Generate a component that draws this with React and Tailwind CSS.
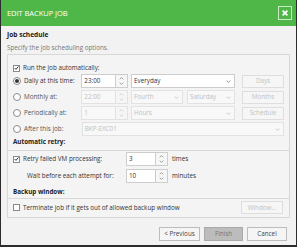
import React from 'react';

const Chevron = ({ up, className = '' }) => (
    <svg viewBox="0 0 8 5" className={`w-[5px] h-[3px] ${className}`} fill="none" stroke="currentColor" strokeWidth="1.3">
        {up ? <path d="M1 4 L4 1 L7 4" /> : <path d="M1 1 L4 4 L7 1" />}
    </svg>
);

const Spinner = ({ disabled }) => (
    <div className={`w-[12px] h-[14px] flex flex-col items-center justify-center gap-[2px] border border-l-0 ${disabled ? 'border-[#e2e2e2] bg-[#f6f6f6] text-[#c8c8c8]' : 'border-[#cdcdcd] bg-[#f7f7f7] text-[#888]'}`}>
        <Chevron up />
        <Chevron />
    </div>
);

const TextBox = ({ value, width, disabled }) => (
    <div className={`h-[14px] ${width} flex items-center px-[2px] border ${disabled ? 'border-[#e2e2e2] bg-[#f8f8f8] text-[#c0c0c0]' : 'border-[#cdcdcd] bg-white text-[#333]'}`}>
        {value}
    </div>
);

const Select = ({ value, width, disabled }) => (
    <div className={`h-[14px] ${width} flex items-center border ${disabled ? 'border-[#e2e2e2] bg-[#f8f8f8] text-[#c0c0c0]' : 'border-[#cdcdcd] bg-white text-[#333]'}`}>
        <span className="flex-1 px-[2px]">{value}</span>
        <span className={`w-[12px] h-full flex items-center justify-center ${disabled ? 'text-[#c0c0c0]' : 'text-[#777]'}`}>
            <Chevron />
        </span>
    </div>
);

const SideButton = ({ label }) => (
    <div className="w-[42px] h-[13px] flex items-center justify-center border border-[#dedede] bg-[#f6f6f6] text-[#c2c2c2]">
        {label}
    </div>
);

const Radio = ({ checked }) => (
    <span className="w-[8px] h-[8px] rounded-full border border-[#8a8a8a] bg-white flex items-center justify-center shrink-0">
        {checked && <span className="w-[4px] h-[4px] rounded-full bg-[#333]" />}
    </span>
);

const Checkbox = ({ checked }) => (
    <span className="w-[7px] h-[7px] border border-[#8a8a8a] bg-white flex items-center justify-center shrink-0">
        {checked && (
            <svg viewBox="0 0 8 8" className="w-[6px] h-[6px]" fill="none" stroke="#333" strokeWidth="1.6">
                <path d="M1 4 L3.2 6.2 L7 1.5" />
            </svg>
        )}
    </span>
);

const ScheduleRow = ({ checked, label, children }) => (
    <div className="h-[14px] flex items-center">
        <div className="w-[69px] flex items-center gap-[3px]">
            <Radio checked={checked} />
            <span className={checked ? 'text-[#333]' : 'text-[#555]'}>{label}</span>
        </div>
        {children}
    </div>
);

const App = () => {
    return (
        <div className="w-[297px] h-[247px] bg-[#f2f2f2] border-x border-b-2 border-[#2c2c2c] flex flex-col font-['Open_Sans',sans-serif] text-[6.3px] leading-[10px] text-[#333]">
            {/* Header */}
            <div className="h-[26px] bg-[#4eb748] flex items-center justify-between pl-[6px] pr-[4px]">
                <span className="text-white text-[7.6px] tracking-[-0.1px]">EDIT BACKUP JOB</span>
                <button className="w-[14px] h-[14px] border border-white/70 flex items-center justify-center">
                    <svg viewBox="0 0 10 10" className="w-[8px] h-[8px]" fill="none" stroke="white" strokeWidth="2.2">
                        <path d="M2 2 L8 8 M8 2 L2 8" />
                    </svg>
                </button>
            </div>

            <div className="flex-1 flex flex-col px-[6px] pt-[4px]">
                <div className="font-bold text-[#222] text-[6.6px]">Job schedule</div>
                <div className="mt-[3px] text-[#777]">Specify the job scheduling options.</div>

                {/* Options box */}
                <div className="mt-[1px] h-[164px] border border-[#d8d8d8] bg-[#f4f4f4] flex flex-col pt-[7px] pl-[5px] pr-[5px]">
                    <div className="h-[12px] flex items-center gap-[3px]">
                        <Checkbox checked />
                        <span>Run the job automatically:</span>
                    </div>

                    <div className="flex flex-col gap-[2px]">
                        <ScheduleRow checked label="Daily at this time:">
                            <TextBox value="23:00" width="w-[35px]" />
                            <Spinner />
                            <div className="ml-[3px]"><Select value="Everyday" width="w-[104px]" /></div>
                            <div className="ml-[7px]"><SideButton label="Days" /></div>
                        </ScheduleRow>
                        <ScheduleRow label="Monthly at:">
                            <TextBox value="22:00" width="w-[35px]" disabled />
                            <Spinner disabled />
                            <div className="ml-[3px]"><Select value="Fourth" width="w-[52px]" disabled /></div>
                            <div className="ml-[4px]"><Select value="Saturday" width="w-[48px]" disabled /></div>
                            <div className="ml-[7px]"><SideButton label="Months" /></div>
                        </ScheduleRow>
                        <ScheduleRow label="Periodically at:">
                            <TextBox value="1" width="w-[35px]" disabled />
                            <Spinner disabled />
                            <div className="ml-[3px]"><Select value="Hours" width="w-[104px]" disabled /></div>
                            <div className="ml-[7px]"><SideButton label="Schedule" /></div>
                        </ScheduleRow>
                        <ScheduleRow label="After this job:">
                            <Select value="BKP-EXC01" width="w-[203px]" disabled />
                        </ScheduleRow>
                    </div>

                    <div className="mt-[1px] h-[10px] font-bold text-[#222]">Automatic retry:</div>
                    <div className="mt-[3px] -mx-[5px] border-t border-[#d8d8d8]" />

                    <div className="mt-[1px] h-[14px] flex items-center">
                        <div className="w-[113px] flex items-center gap-[3px]">
                            <Checkbox checked />
                            <span>Retry failed VM processing:</span>
                        </div>
                        <TextBox value="3" width="w-[30px]" />
                        <Spinner />
                        <span className="ml-[4px]">times</span>
                    </div>
                    <div className="mt-[3px] h-[14px] flex items-center">
                        <div className="w-[113px] pl-[14px]">Wait before each attempt for:</div>
                        <TextBox value="10" width="w-[30px]" />
                        <Spinner />
                        <span className="ml-[4px]">minutes</span>
                    </div>

                    <div className="mt-[4px] h-[10px] font-bold text-[#222]">Backup window:</div>
                    <div className="mt-[1px] -mx-[5px] border-t border-[#d8d8d8]" />

                    <div className="mt-[2px] h-[13px] flex items-center justify-between">
                        <div className="flex items-center gap-[3px]">
                            <Checkbox />
                            <span>Terminate job if it gets out of allowed backup window</span>
                        </div>
                        <div className="mr-[1px]"><SideButton label="Window..." /></div>
                    </div>
                </div>

                {/* Footer */}
                <div className="mt-[9px] flex justify-end gap-[4px] pr-[3px]">
                    <button className="w-[41px] h-[14px] border border-[#bdbdbd] bg-[#f5f5f5] text-[#444] flex items-center justify-center">&lt; Previous</button>
                    <button className="w-[39px] h-[14px] border border-[#a9a9a9] bg-[#bcbcbc] text-[#777] flex items-center justify-center">Finish</button>
                    <button className="w-[40px] h-[14px] border border-[#bdbdbd] bg-[#f5f5f5] text-[#444] flex items-center justify-center">Cancel</button>
                </div>
            </div>
        </div>
    );
};

export default App;
